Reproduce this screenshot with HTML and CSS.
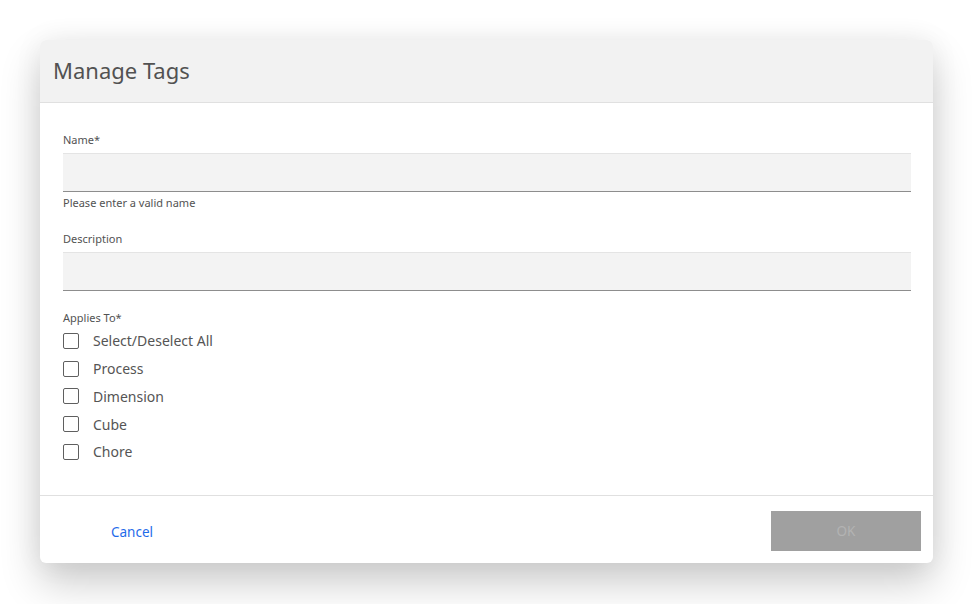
FILE: index.html
```html
<!DOCTYPE html>
<html>
<head>
<meta charset="utf-8">
<link rel="stylesheet" href="styles.css">
</head>
<body>
<div class="dialog">
  <div class="header"><h1 class="title">Manage Tags</h1></div>
  <div class="content">
    <div class="field field-name">
      <label class="label">Name*</label>
      <div class="input"></div>
      <div class="helper">Please enter a valid name</div>
    </div>
    <div class="field">
      <label class="label">Description</label>
      <div class="input"></div>
    </div>
    <div class="group">
      <div class="label">Applies To*</div>
      <div class="checks">
        <div class="check"><span class="box"></span><span>Select/Deselect All</span></div>
        <div class="check"><span class="box"></span><span>Process</span></div>
        <div class="check"><span class="box"></span><span>Dimension</span></div>
        <div class="check"><span class="box"></span><span>Cube</span></div>
        <div class="check"><span class="box"></span><span>Chore</span></div>
      </div>
    </div>
  </div>
  <div class="footer">
    <span class="cancel">Cancel</span>
    <span class="ok">OK</span>
  </div>
</div>
</body>
</html>
```
FILE: styles.css
```css
html, body { margin: 0; padding: 0; background: #fff; }
body {
  font-family: "Noto Sans", "Open Sans", sans-serif;
  color: #525252;
  padding: 40px 0 0 40px;
  height: 604px;
  box-sizing: border-box;
  overflow: hidden;
}
.dialog {
  width: 893px;
  height: 523px;
  background: #fff;
  border-radius: 6px;
  box-shadow: 0 20px 40px rgba(0,0,0,0.2), 0 0 30px rgba(0,0,0,0.06);
  display: flex;
  flex-direction: column;
  overflow: hidden;
}
.header {
  height: 62px;
  background: #f2f2f2;
  border-bottom: 1px solid #e0e0e0;
  display: flex;
  align-items: center;
  padding-left: 13px;
  flex: none;
}
.title {
  margin: 0;
  font-size: 22px;
  font-weight: 400;
  color: #525252;
  padding-bottom: 2px;
}
.content {
  flex: 1;
  padding: 29px 22px 0 23px;
  border-bottom: 1px solid #e0e0e0;
}
.field { margin-bottom: 19px; }
.field-name { margin-bottom: 21px; }
.label {
  display: block;
  font-size: 11px;
  color: #525252;
  line-height: 15px;
  margin-bottom: 6px;
}
.input {
  height: 37px;
  background: #f3f3f3;
  border-top: 1px solid #e4e4e4;
  border-bottom: 1px solid #8d8d8d;
}
.helper {
  font-size: 11px;
  line-height: 15px;
  margin-top: 3px;
  color: #525252;
}
.group .label { margin-bottom: 2px; }
.checks { display: flex; flex-direction: column; }
.check {
  display: flex;
  align-items: center;
  height: 27.75px;
  font-size: 14px;
  color: #555;
}
.box {
  border: 1px solid #5f5f5f;
  border-radius: 2px;
  margin-right: 14px;
  box-sizing: border-box;
  width: 16px;
  height: 16px;
}
.footer {
  height: 67px;
  flex: none;
  display: flex;
  align-items: center;
  justify-content: space-between;
  padding: 2px 12px 0 71px;
  box-sizing: border-box;
}
.cancel {
  color: #1f6bea;
  font-size: 13.5px;
  padding-top: 2px;
}
.ok {
  width: 150px;
  height: 40px;
  background: #a0a0a0;
  color: #b3b3b3;
  font-size: 13.5px;
  display: flex;
  align-items: center;
  justify-content: center;
}
```
